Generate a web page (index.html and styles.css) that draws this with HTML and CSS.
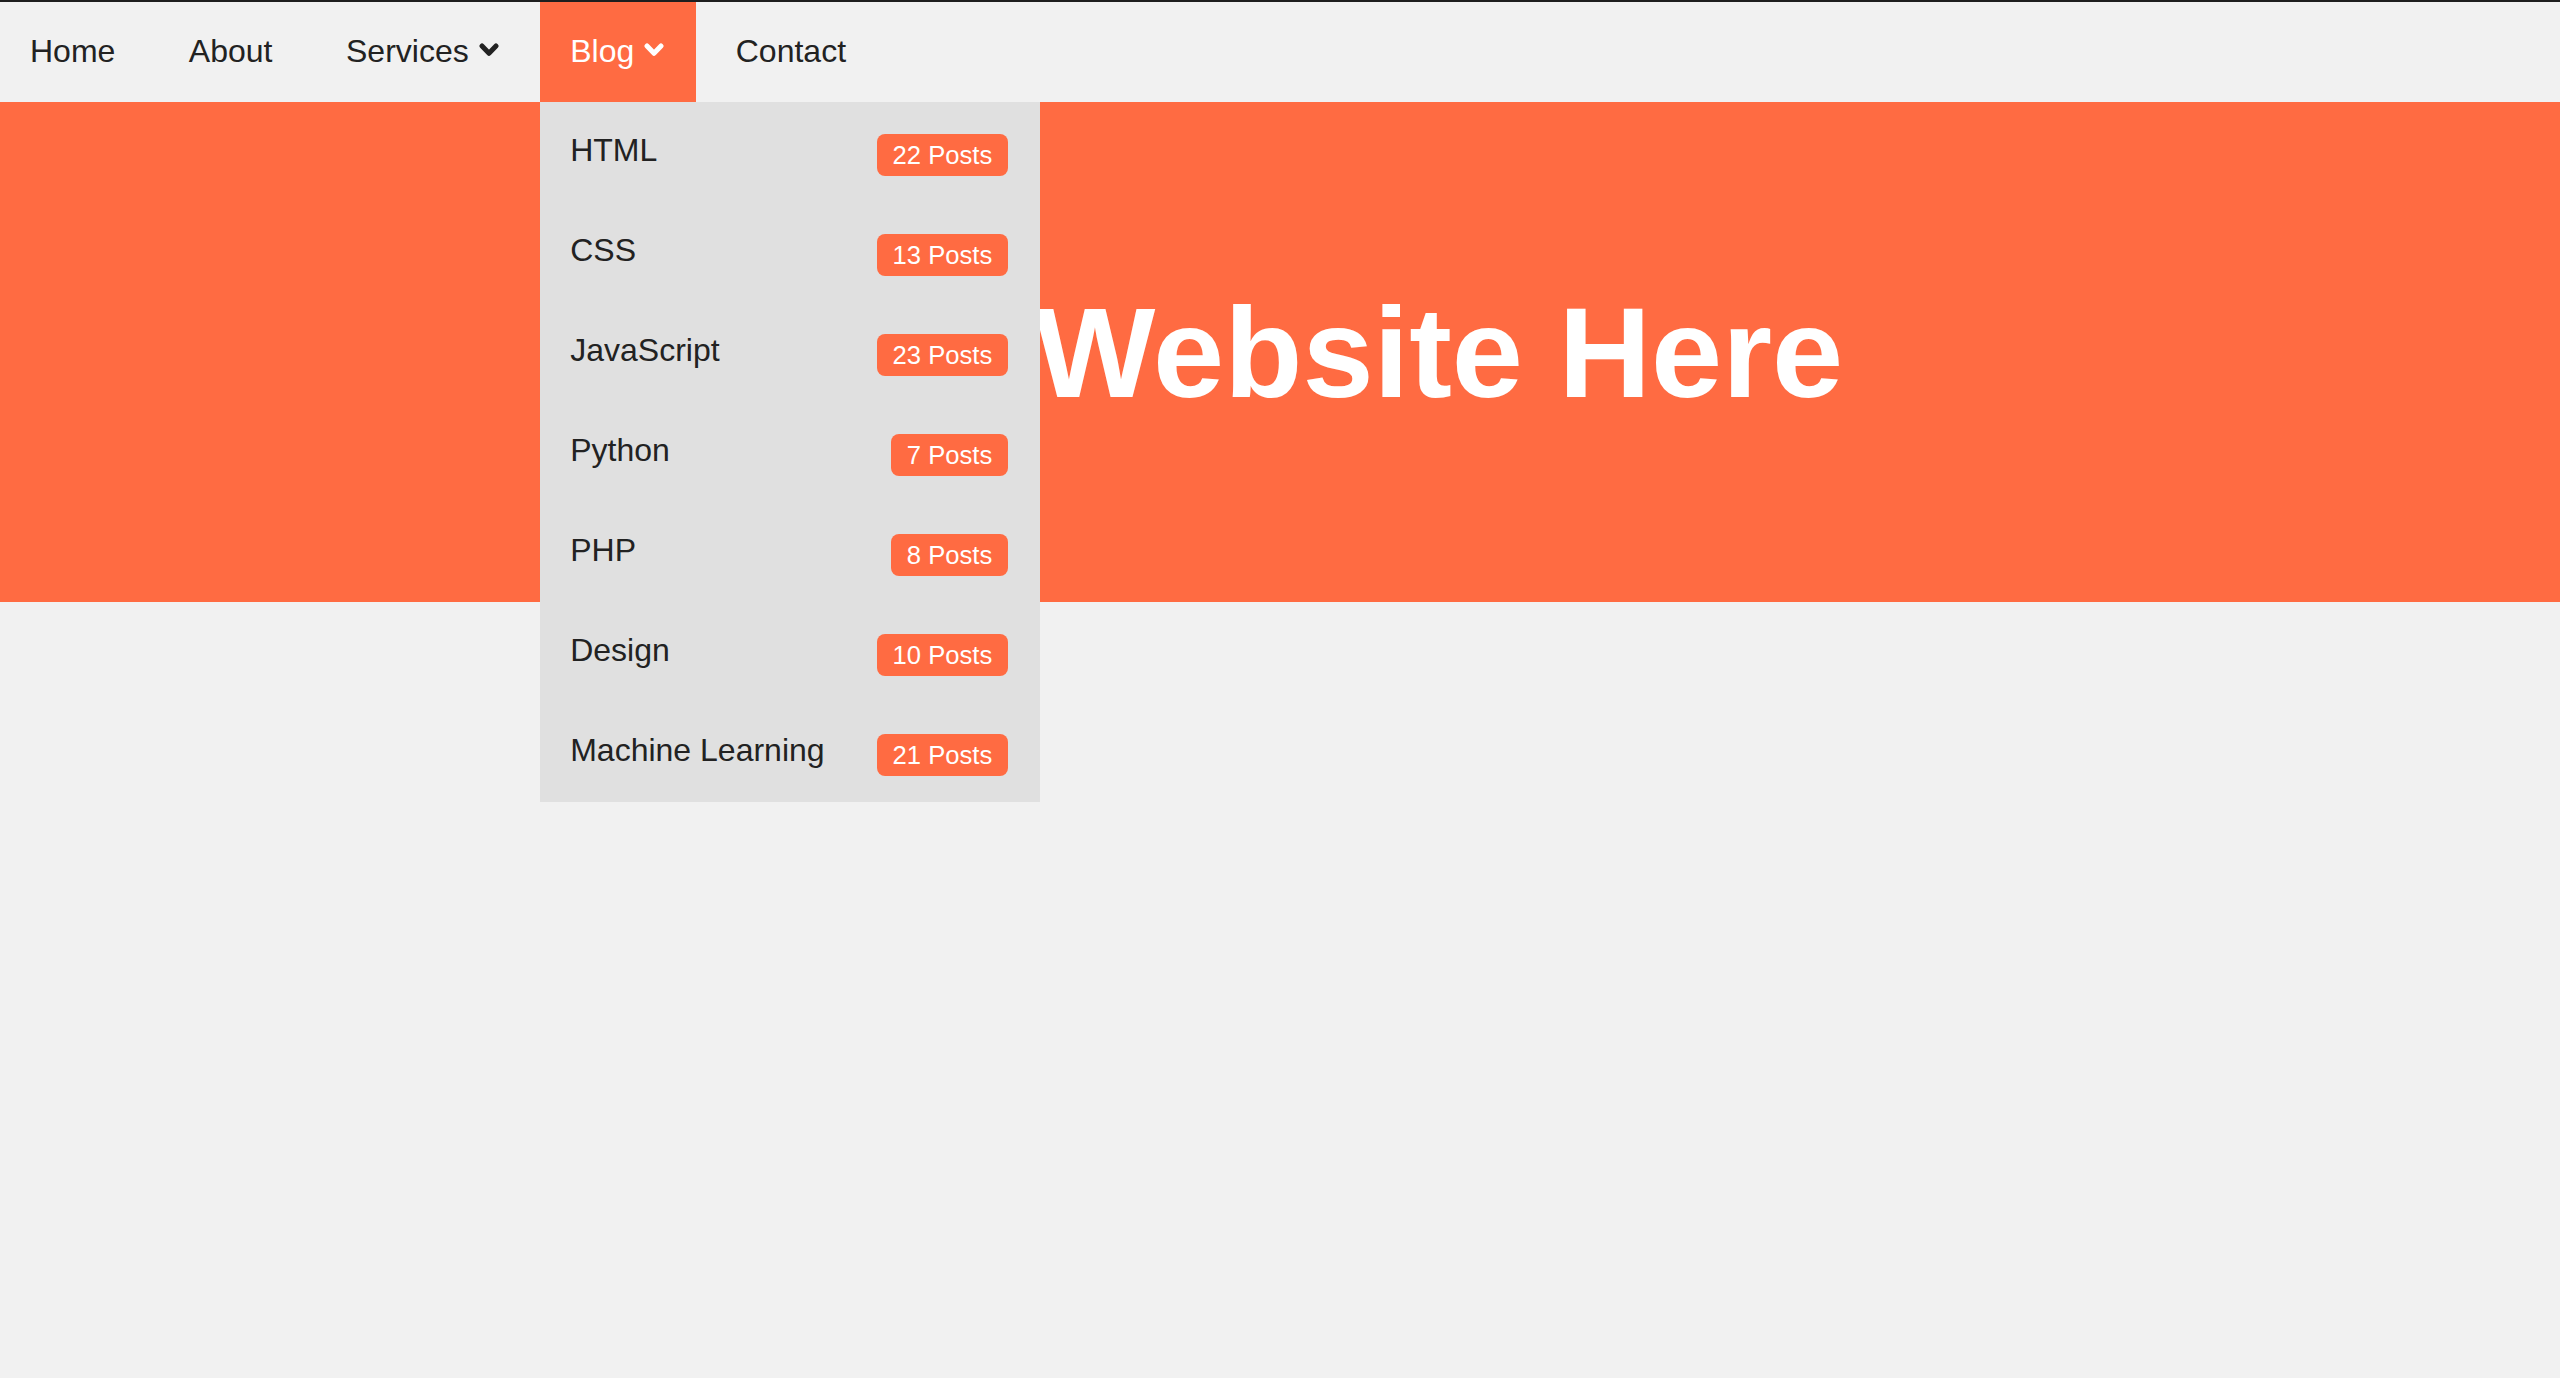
FILE: index.html
```html
<!DOCTYPE html>
<html lang="en">
<head>
<meta charset="utf-8">
<title>Dropdown Menu</title>
<link rel="stylesheet" href="styles.css">
</head>
<body>
<header class="topbar">
  <nav class="nav">
    <ul class="nav-list">
      <li class="nav-item"><a class="nav-link" href="#">Home</a></li>
      <li class="nav-item"><a class="nav-link" href="#">About</a></li>
      <li class="nav-item"><a class="nav-link" href="#">Services<svg class="chevron" viewBox="0 0 20 14" aria-hidden="true"><polyline points="3,3 10,10.3 17,3"/></svg></a></li>
      <li class="nav-item has-dropdown">
        <a class="nav-link nav-link-active" href="#">Blog<svg class="chevron" viewBox="0 0 20 14" aria-hidden="true"><polyline points="3,3 10,10.3 17,3"/></svg></a>
        <ul class="dropdown">
          <li class="dropdown-item"><a class="dropdown-link" href="#">HTML</a><span class="badge">22 Posts</span></li>
          <li class="dropdown-item"><a class="dropdown-link" href="#">CSS</a><span class="badge">13 Posts</span></li>
          <li class="dropdown-item"><a class="dropdown-link" href="#">JavaScript</a><span class="badge">23 Posts</span></li>
          <li class="dropdown-item"><a class="dropdown-link" href="#">Python</a><span class="badge">7 Posts</span></li>
          <li class="dropdown-item"><a class="dropdown-link" href="#">PHP</a><span class="badge">8 Posts</span></li>
          <li class="dropdown-item"><a class="dropdown-link" href="#">Design</a><span class="badge">10 Posts</span></li>
          <li class="dropdown-item"><a class="dropdown-link" href="#">Machine Learning</a><span class="badge">21 Posts</span></li>
        </ul>
      </li>
      <li class="nav-item"><a class="nav-link" href="#">Contact</a></li>
    </ul>
  </nav>
</header>
<section class="hero">
  <h1 class="hero-title">Your Website Here</h1>
</section>
</body>
</html>
```
FILE: styles.css
```css
html, body {
  margin: 0;
  padding: 0;
}

html {
  background: #f1f1f1;
}

body {
  box-sizing: border-box;
  min-height: 100vh;
  background: #f1f1f1;
  font-family: "Liberation Sans", Arial, Helvetica, sans-serif;
  color: #222222;
  border-top: 2px solid #1e1e1e;
}

.topbar {
  position: relative;
  z-index: 5;
  background: #f1f1f1;
}

.nav-list {
  display: flex;
  gap: 9.5px;
  list-style: none;
  margin: 0;
  padding: 0;
  height: 100px;
}

.nav-item {
  position: relative;
  display: flex;
}

.nav-link {
  display: flex;
  align-items: center;
  padding: 0 34px 2px 30px;
  font-size: 32px;
  color: #222222;
  text-decoration: none;
}

.nav-link-active {
  background: #ff6b42;
  color: #ffffff;
}

.chevron {
  width: 20px;
  height: 14px;
  margin: 0 -2px 2px 10px;
  fill: none;
  stroke: currentColor;
  stroke-width: 5;
  stroke-linecap: round;
  stroke-linejoin: round;
}

.dropdown {
  position: absolute;
  top: 100%;
  left: 0;
  z-index: 10;
  width: 500px;
  margin: 0;
  padding: 0;
  list-style: none;
  background: #e0e0e0;
}

.dropdown-item {
  display: flex;
  align-items: center;
  justify-content: space-between;
  box-sizing: border-box;
  height: 100px;
  padding: 0 32px 0 30px;
}

.dropdown-link {
  font-size: 32px;
  color: #222222;
  text-decoration: none;
  margin-bottom: 4px;
}

.badge {
  background: #ff6b42;
  color: #ffffff;
  font-size: 25.6px;
  height: 42px;
  line-height: 42px;
  padding: 0 16px;
  border-radius: 8px;
  margin-top: 6px;
}

.hero {
  height: 500px;
  background: #ff6b42;
  display: flex;
  align-items: center;
  justify-content: center;
}

.hero-title {
  margin: 0;
  font-size: 128px;
  font-weight: 700;
  color: #ffffff;
}
```
